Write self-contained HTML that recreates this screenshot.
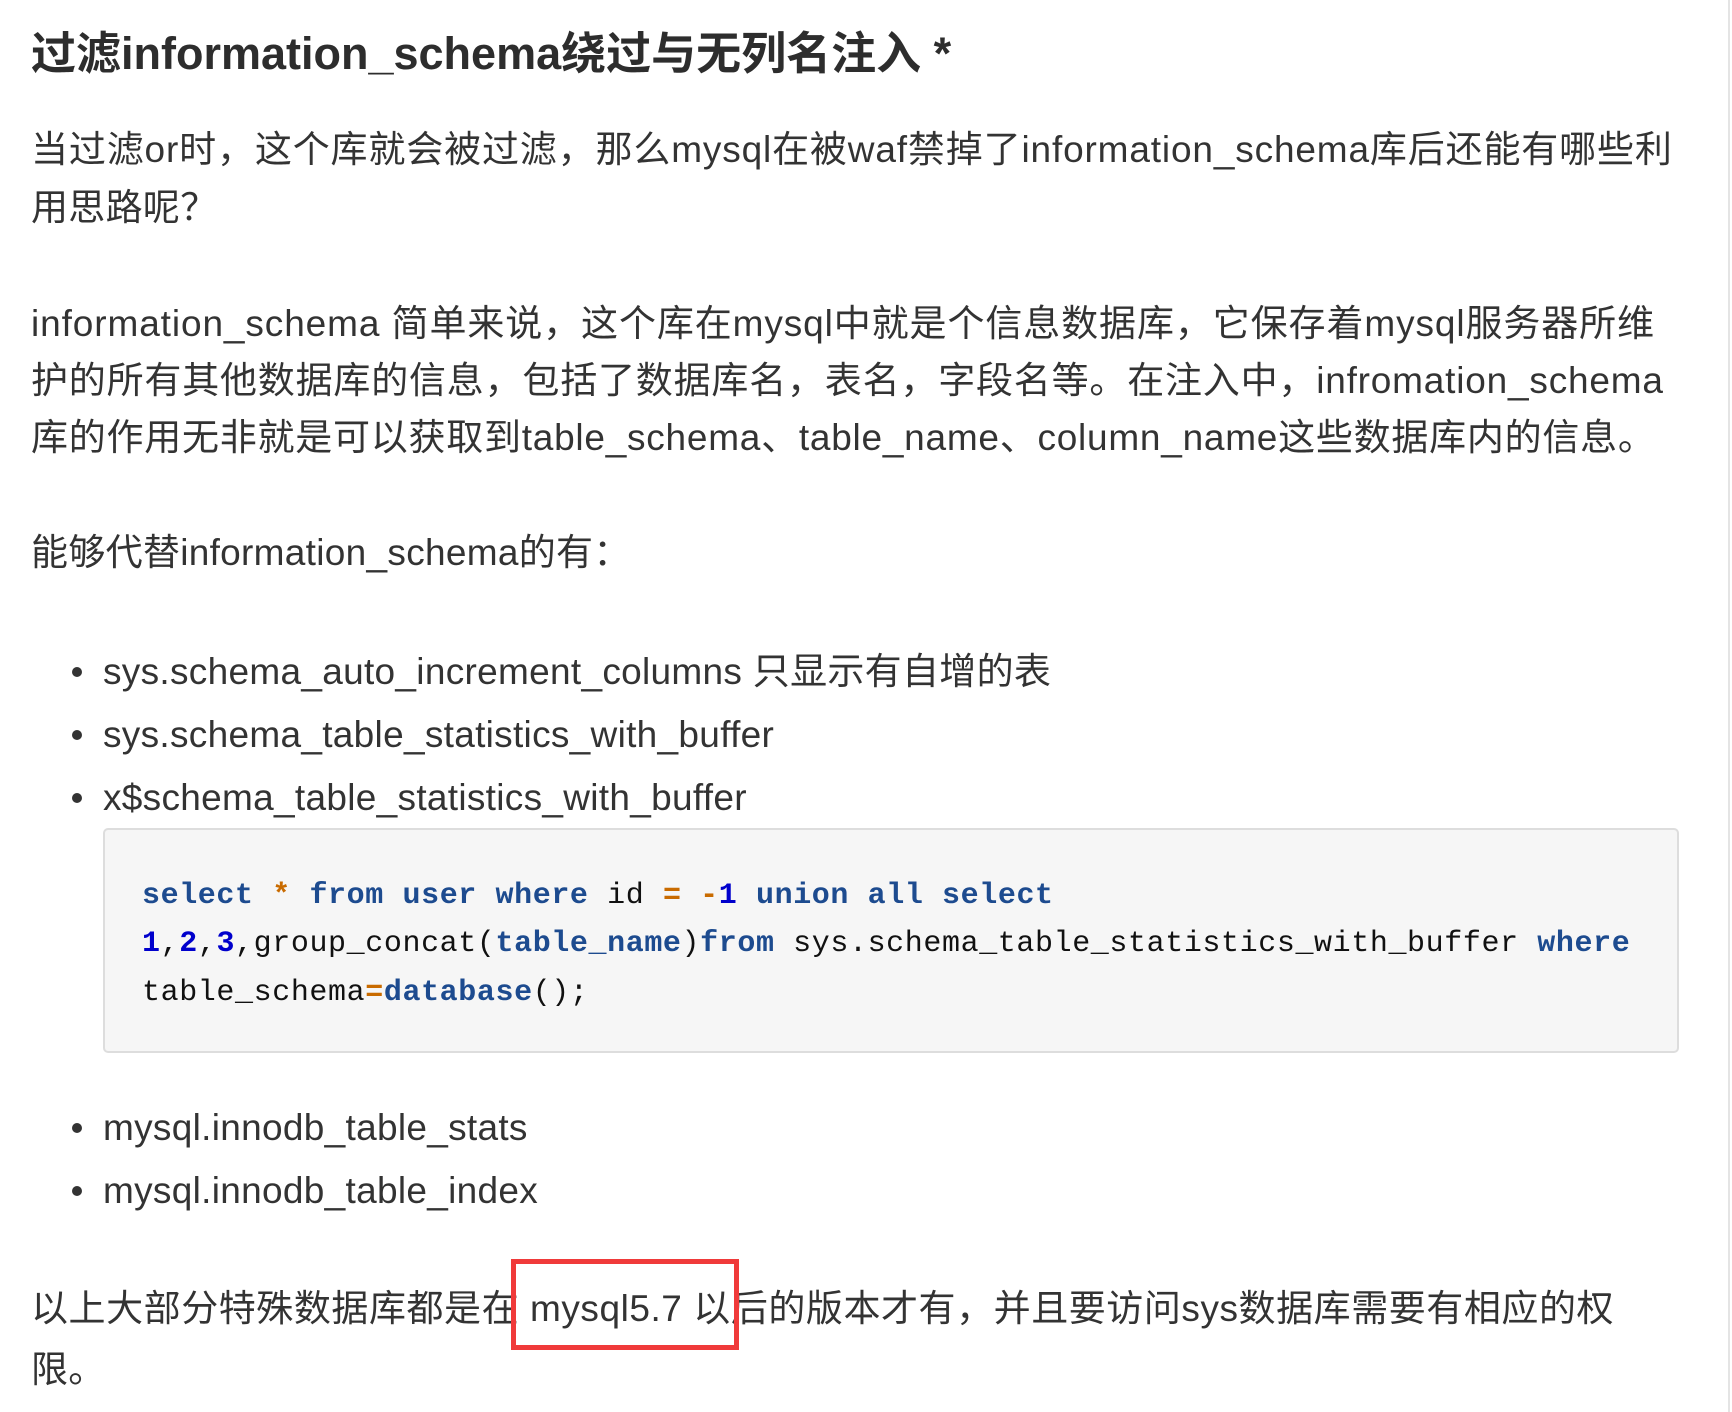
<!DOCTYPE html>
<html><head><meta charset="utf-8"><style>
html,body{margin:0;padding:0;background:#fff;width:1732px;height:1412px;overflow:hidden;position:relative}
.l{position:absolute;left:31px;white-space:nowrap;font-family:"Liberation Sans","Noto Sans CJK SC",sans-serif;font-size:37px;letter-spacing:0.3px;color:#333;line-height:40px}
h1{position:absolute;left:31px;top:30px;margin:0;white-space:nowrap;font-family:"Liberation Sans","Noto Sans CJK SC",sans-serif;font-size:45px;font-weight:bold;color:#2d2d2d;line-height:48px}
.dot{position:absolute;left:72px;width:10px;height:10px;border-radius:50%;background:#333}
.b{left:103px}
.code{position:absolute;left:103px;top:828px;width:1576px;height:225px;background:#f6f6f6;border:2px solid #ddd;border-radius:5px;box-sizing:border-box}
.c{position:absolute;left:142px;white-space:nowrap;font-family:"Liberation Mono",monospace;font-size:30px;line-height:36px;color:#111;letter-spacing:0.6px}
.k{color:#1d4b8f;font-weight:bold}.n{color:#0000cc;font-weight:bold}.o{color:#c96b00;font-weight:bold}
.red{position:absolute;left:511px;top:1259px;width:228px;height:91px;border:5px solid #f03a3a;box-sizing:border-box}
.sb{position:absolute;left:1728px;top:0;width:2px;height:1412px;background:#e4e4e4}
</style></head><body>
<h1>过滤information_schema绕过与无列名注入 *</h1>
<div class="l" style="top:130px;letter-spacing:0.85px">当过滤or时，这个库就会被过滤，那么mysql在被waf禁掉了information_schema库后还能有哪些利</div>
<div class="l" style="top:188px">用思路呢？</div>
<div class="l" style="top:304px;letter-spacing:0.9px">information_schema 简单来说，这个库在mysql中就是个信息数据库，它保存着mysql服务器所维</div>
<div class="l" style="top:361px;letter-spacing:0.8px">护的所有其他数据库的信息，包括了数据库名，表名，字段名等。在注入中，infromation_schema</div>
<div class="l" style="top:418px;letter-spacing:0.75px">库的作用无非就是可以获取到table_schema、table_name、column_name这些数据库内的信息。</div>
<div class="l" style="top:533px">能够代替information_schema的有：</div>
<div class="dot" style="top:667px"></div><div class="l b" style="top:652px">sys.schema_auto_increment_columns 只显示有自增的表</div>
<div class="dot" style="top:730px"></div><div class="l b" style="top:715px">sys.schema_table_statistics_with_buffer</div>
<div class="dot" style="top:793px"></div><div class="l b" style="top:778px">x$schema_table_statistics_with_buffer</div>
<div class="code"></div>
<div class="c" style="top:878px"><span class="k">select</span> <span class="o">*</span> <span class="k">from</span> <span class="k">user</span> <span class="k">where</span> id <span class="o">=</span> <span class="o">-</span><span class="n">1</span> <span class="k">union</span> <span class="k">all</span> <span class="k">select</span></div>
<div class="c" style="top:926px"><span class="n">1</span>,<span class="n">2</span>,<span class="n">3</span>,group_concat(<span class="k">table_name</span>)<span class="k">from</span> sys.schema_table_statistics_with_buffer <span class="k">where</span></div>
<div class="c" style="top:975px">table_schema<span class="o">=</span><span class="k">database</span>();</div>
<div class="dot" style="top:1123px"></div><div class="l b" style="top:1108px">mysql.innodb_table_stats</div>
<div class="dot" style="top:1186px"></div><div class="l b" style="top:1171px">mysql.innodb_table_index</div>
<div class="l" style="top:1289px;letter-spacing:0.55px">以上大部分特殊数据库都是在 mysql5.7 以后的版本才有，并且要访问sys数据库需要有相应的权</div>
<div class="l" style="top:1350px">限。</div>
<div class="red"></div>
<div class="sb"></div>
</body></html>
